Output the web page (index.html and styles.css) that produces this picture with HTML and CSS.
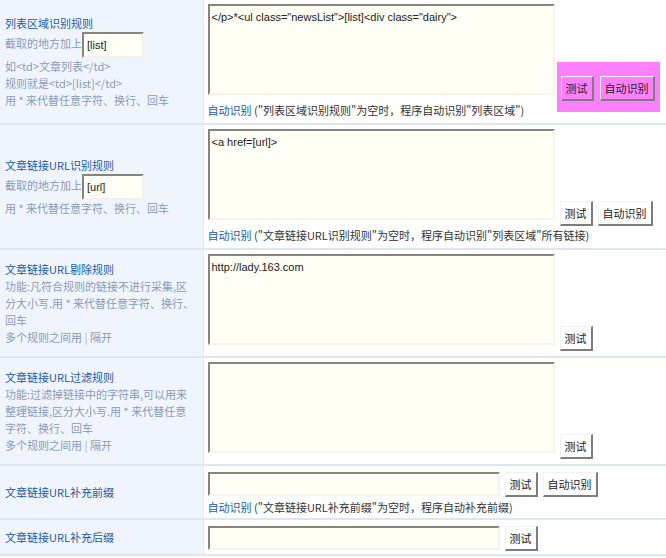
FILE: index.html
```html
<!DOCTYPE html>
<html lang="zh-CN">
<head>
    <meta charset="UTF-8">
    <title>采集规则</title>
    <link rel="stylesheet" href="styles.css">
</head>
<body>
    <table class="rules">
        <tr>
            <td class="key">
                <div class="name">列表区域识别规则</div>
                <div class="hint">截取的地方加上<input class="mini" type="text" value="[list]"></div>
                <div class="hint">如&lt;td&gt;文章列表&lt;/td&gt;</div>
                <div class="hint">规则就是&lt;td&gt;[list]&lt;/td&gt;</div>
                <div class="hint">用 * 来代替任意字符、换行、回车</div>
            </td>
            <td class="val">
                <div class="line">
                    <textarea class="code">&lt;/p&gt;*&lt;ul class="newsList"&gt;[list]&lt;div class="dairy"&gt;</textarea>
                    <span class="btns mark">
                        <button class="btn">测试</button>
                        <button class="btn">自动识别</button>
                    </span>
                </div>
                <div class="tip"><a href="#" class="auto">自动识别</a> ("列表区域识别规则"为空时，程序自动识别"列表区域")</div>
            </td>
        </tr>
        <tr>
            <td class="key">
                <div class="name">文章链接URL识别规则</div>
                <div class="hint">截取的地方加上<input class="mini" type="text" value="[url]"></div>
                <div class="hint">用 * 来代替任意字符、换行、回车</div>
            </td>
            <td class="val">
                <div class="line">
                    <textarea class="code">&lt;a href=[url]&gt;</textarea>
                    <span class="btns">
                        <button class="btn">测试</button>
                        <button class="btn">自动识别</button>
                    </span>
                </div>
                <div class="tip"><a href="#" class="auto">自动识别</a> ("文章链接URL识别规则"为空时，程序自动识别"列表区域"所有链接)</div>
            </td>
        </tr>
        <tr>
            <td class="key">
                <div class="name">文章链接URL剔除规则</div>
                <div class="hint">功能:凡符合规则的链接不进行采集,区分大小写.用 * 来代替任意字符、换行、回车</div>
                <div class="hint">多个规则之间用 <span class="bar">|</span> 隔开</div>
            </td>
            <td class="val">
                <div class="line">
                    <textarea class="code">http://lady.163.com</textarea>
                    <span class="btns">
                        <button class="btn">测试</button>
                    </span>
                </div>
            </td>
        </tr>
        <tr>
            <td class="key">
                <div class="name">文章链接URL过滤规则</div>
                <div class="hint">功能:过滤掉链接中的字符串,可以用来整理链接,区分大小写.用 * 来代替任意字符、换行、回车</div>
                <div class="hint">多个规则之间用 <span class="bar">|</span> 隔开</div>
            </td>
            <td class="val">
                <div class="line">
                    <textarea class="code"></textarea>
                    <span class="btns">
                        <button class="btn">测试</button>
                    </span>
                </div>
            </td>
        </tr>
        <tr>
            <td class="key">
                <div class="name">文章链接URL补充前缀</div>
            </td>
            <td class="val short">
                <div class="line single">
                    <input class="field" type="text">
                    <span class="btns">
                        <button class="btn">测试</button>
                        <button class="btn">自动识别</button>
                    </span>
                </div>
                <div class="tip"><a href="#" class="auto">自动识别</a> ("文章链接URL补充前缀"为空时，程序自动补充前缀)</div>
            </td>
        </tr>
        <tr>
            <td class="key">
                <div class="name">文章链接URL补充后缀</div>
            </td>
            <td class="val short">
                <div class="line single">
                    <input class="field" type="text">
                    <span class="btns">
                        <button class="btn">测试</button>
                    </span>
                </div>
            </td>
        </tr>
    </table>
</body>
</html>
```

FILE: styles.css
```css
* {
    margin: 0;
    padding: 0;
    box-sizing: border-box;
}

body {
    font-family: "Noto Sans CJK SC", "Liberation Sans", sans-serif;
    font-size: 11px;
    line-height: 17px;
    color: #333;
    background: #fff;
}

.rules {
    width: 666px;
    border-collapse: collapse;
}

.rules td {
    border-bottom: 2px solid #dfe6f0;
    vertical-align: top;
}

.key {
    width: 203px;
    background: #f0f5fd;
    border-right: 1px solid #e4eaf3;
    padding: 0 8px 0 5px;
    vertical-align: middle !important;
    color: #8b9bb9;
}

.name {
    color: #1c5aa6;
}

.hint .bar {
    color: #aab5c8;
}

.mini {
    width: 62px;
    height: 26px;
    vertical-align: middle;
    font-family: "Liberation Sans", sans-serif;
    font-size: 11px;
    color: #222;
    padding: 0 3px;
    background: #fffff6;
    border: 2px solid;
    border-color: #85857d #f2f2ea #f2f2ea #85857d;
    outline: none;
}

.val {
    padding: 4px 4px 5px;
}

.val.short {
    padding: 6px 4px 3px;
}

.line {
    display: flex;
    align-items: flex-end;
}

.line.single {
    align-items: flex-start;
}

.code {
    width: 347px;
    height: 91px;
    margin-bottom: 6px;
    resize: none;
    overflow: hidden;
    font-family: "Liberation Sans", sans-serif;
    font-size: 11px;
    line-height: 14px;
    color: #222;
    padding: 4px 2px;
    background: #fffff6;
    border: 2px solid;
    border-color: #85857d #f4f4ec #f4f4ec #85857d;
    outline: none;
}

.field {
    width: 292px;
    height: 24px;
    background: #fffff6;
    border: 2px solid;
    border-color: #85857d #f4f4ec #f4f4ec #85857d;
    outline: none;
}

.btns {
    display: flex;
    gap: 5px;
    margin-left: 5px;
}

.btn {
    height: 25px;
    padding: 0 4px;
    font-family: "Noto Sans CJK SC", sans-serif;
    font-size: 11px;
    color: #222;
    background: transparent;
    border: 1px solid;
    border-right-width: 2px;
    border-bottom-width: 2px;
    border-color: #f2f2f2 #7d7d7d #7d7d7d #f2f2f2;
    cursor: pointer;
}

/* highlighted button group */
.mark {
    position: relative;
    z-index: 0;
    margin-left: 6px;
    gap: 6px;
}

.mark::before {
    content: '';
    position: absolute;
    top: -14px;
    bottom: -11px;
    left: -4px;
    right: -5px;
    background: #ff80ff;
    z-index: -1;
}

.tip {
    line-height: 16px;
    margin-top: 1px;
}

.short .tip {
    margin-top: 2px;
}

.auto {
    color: #1c5aa6;
    text-decoration: none;
}
```
